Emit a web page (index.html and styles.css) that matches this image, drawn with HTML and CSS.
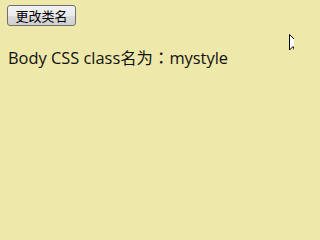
FILE: index.html
```html
<!DOCTYPE html>
<html>
<head>
<meta charset="utf-8">
<link rel="stylesheet" href="styles.css">
</head>
<body class="mystyle">
<div class="bar"><button class="btn">更改类名</button></div>
<p class="info">Body CSS class名为<span class="colon">：</span>mystyle</p>
<svg class="cursor" width="12" height="20" viewBox="0 0 12 20"><path d="M0.5 0.5 L0.5 16 L4 12.5 L6.5 18.5 L9 17.5 L6.5 11.5 L11.5 11.5 Z" fill="#fff" stroke="#000" stroke-width="1"/></svg>
</body>
</html>
```
FILE: styles.css
```css
html, body { margin: 0; padding: 0; }
body.mystyle {
  background: #eee8aa;
  width: 294px;
  height: 233px;
  overflow: hidden;
  position: relative;
  font-family: "Open Sans", "Noto Sans CJK SC", sans-serif;
}
.bar { padding: 4px 0 0 7px; }
.btn {
  font-family: "Noto Sans CJK SC", sans-serif;
  font-size: 13px;
  height: 21px;
  width: 69px;
  padding: 0;
  margin: 0;
  color: #000;
  border: 1px solid #707070;
  border-radius: 3px;
  background: linear-gradient(#f2f2f2, #ebebeb 50%, #dddddd 51%, #cfcfcf);
  line-height: 17px;
}
.info {
  margin: 20px 0 0 8px;
  font-size: 16.4px;
  color: #111;
  line-height: 22px;
}
.colon { font-family: "Noto Sans CJK TC", sans-serif; }
.cursor { position: absolute; left: 289px; top: 34px; }
```
